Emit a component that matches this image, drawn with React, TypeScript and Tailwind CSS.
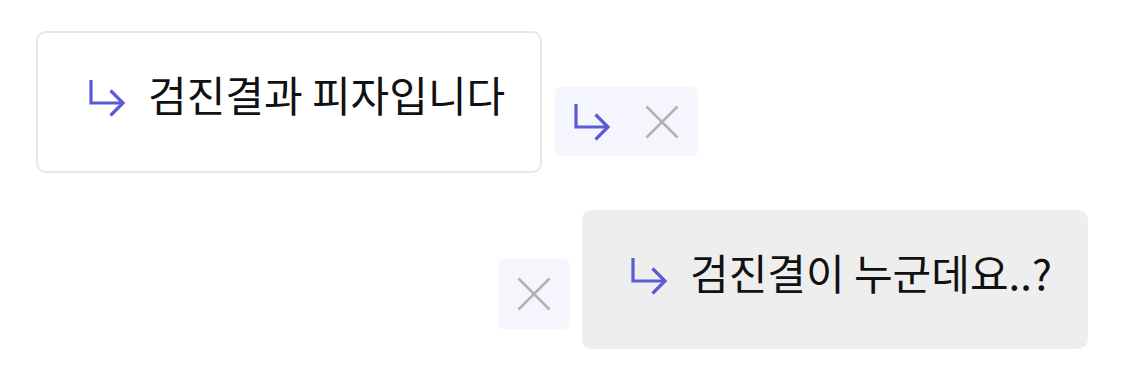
import React from "react";

const Arrow = ({ className = "" }: { className?: string }) => (
  <svg width="38" height="40" viewBox="0 0 38 40" fill="none" className={className}>
    <path d="M3 2 V25 H35" stroke="#5b5bd6" strokeWidth="3.2" strokeLinecap="butt" strokeLinejoin="miter" />
    <path d="M22.5 12.5 L35 25 L22.5 37.5" stroke="#5b5bd6" strokeWidth="3.2" strokeLinecap="butt" strokeLinejoin="miter" />
  </svg>
);

const Cross = () => (
  <svg width="34" height="34" viewBox="0 0 34 34" fill="none">
    <path d="M1.5 1.5 L32.5 32.5 M32.5 1.5 L1.5 32.5" stroke="#b3b3b3" strokeWidth="2.6" />
  </svg>
);

export default function App() {
  return (
    <div
      className="w-[1124px] h-[374px] bg-white overflow-hidden"
      style={{ fontFamily: '"Noto Sans CJK KR", "Noto Sans", sans-serif' }}
    >
      <div className="flex items-end pl-[36px] pt-[31px]">
        <div className="w-[506px] h-[142px] border-2 border-[#e8e8e8] rounded-[10px] bg-white flex items-center pl-[50px] pb-[8px]">
          <Arrow className="shrink-0" />
          <span className="ml-[22px] mb-[8px] text-[42px] leading-none text-[#111111]">검진결과 피자입니다</span>
        </div>
        <div className="ml-[13px] mb-[17px] flex bg-[#f5f5fe] rounded-[6px]">
          <div className="w-[71px] h-[69px] flex items-center justify-center pl-[2px]">
            <Arrow />
          </div>
          <div className="w-[72px] h-[69px] flex items-center justify-center">
            <Cross />
          </div>
        </div>
      </div>
      <div className="flex items-end justify-end pr-[36px] mt-[37px]">
        <div className="mb-[20px] mr-[12px] w-[72px] h-[70px] bg-[#f5f5fe] rounded-[6px] flex items-center justify-center">
          <Cross />
        </div>
        <div className="w-[506px] h-[139px] rounded-[10px] bg-[#eeeeee] flex items-center pl-[48px] pb-[8px]">
          <Arrow className="shrink-0" />
          <span className="ml-[22px] mb-[8px] text-[42px] leading-none text-[#111111]">검진결이 누군데요..?</span>
        </div>
      </div>
    </div>
  );
}
